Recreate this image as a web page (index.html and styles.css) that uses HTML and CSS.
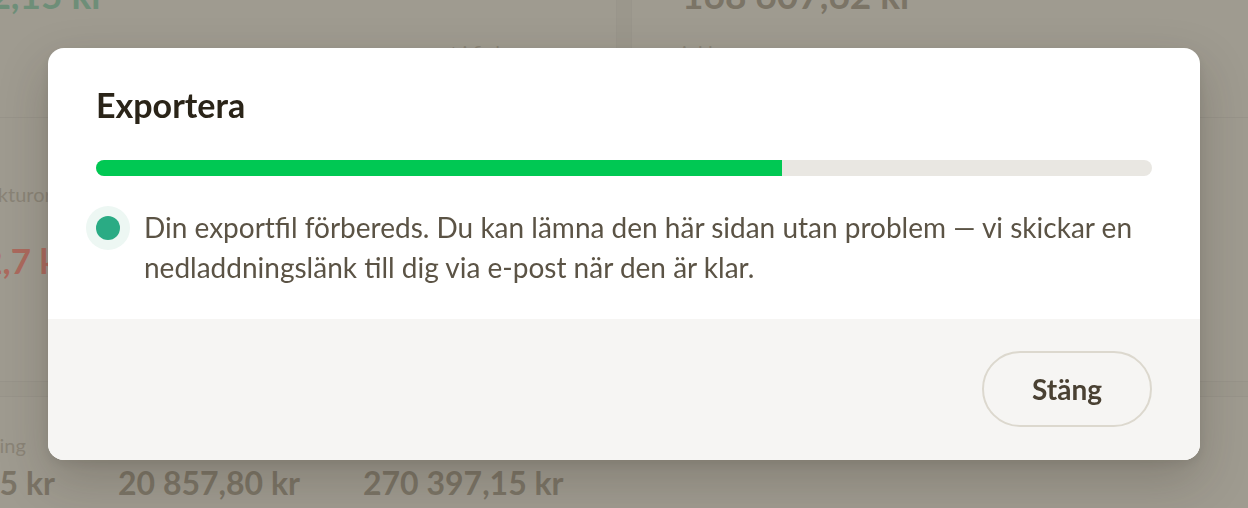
FILE: index.html
```html
<!DOCTYPE html>
<html lang="sv">
<head>
<meta charset="utf-8">
<title>Exportera</title>
<link rel="stylesheet" href="styles.css">
</head>
<body>
<div class="dash">
  <div class="row row1">
    <div class="card card-left">
      <div class="endbox endbox-top"><span class="val val-big val-green">45 312,15 kr</span></div>
      <div class="endbox endbox-label"><span class="label">mot i fjol</span></div>
    </div>
    <div class="gutter"></div>
    <div class="card card-right">
      <div class="val val-big val-gray val-top">168 607,62 kr</div>
      <div class="label label-top">inkl. moms</div>
    </div>
  </div>
  <div class="row row2">
    <div class="card">
      <div class="label label-mid">Fakturor</div>
      <div class="val val-red">12,7 kr</div>
    </div>
  </div>
  <div class="row row3"></div>
  <div class="row row4">
    <div class="col">
      <div class="label label-bottom label-shift">Total fakturering</div>
      <div class="val val-gray">48 412,35 kr</div>
    </div>
    <div class="col">
      <div class="label label-bottom">&nbsp;</div>
      <div class="val val-gray">20 857,80 kr</div>
    </div>
    <div class="col">
      <div class="label label-bottom">&nbsp;</div>
      <div class="val val-gray">270 397,15 kr</div>
    </div>
  </div>
</div>

<div class="overlay">
  <div class="modal" role="dialog" aria-labelledby="modal-title">
    <div class="modal-body">
      <h2 class="modal-title" id="modal-title">Exportera</h2>
      <div class="progress"><div class="progress-fill" style="width: 65%"></div></div>
      <div class="status">
        <span class="status-dot"></span>
        <p class="status-text">Din exportfil förbereds. Du kan lämna den här sidan utan problem — vi skickar en nedladdningslänk till dig via e-post när den är klar.</p>
      </div>
    </div>
    <div class="modal-footer">
      <button class="btn-close" type="button">Stäng</button>
    </div>
  </div>
</div>
</body>
</html>
```
FILE: styles.css
```css
* { box-sizing: border-box; }

html, body {
  margin: 0;
  padding: 0;
}

body {
  width: 1248px;
  height: 508px;
  overflow: hidden;
  background: #9f9b90;
  font-family: Lato, "Noto Sans", "Liberation Sans", sans-serif;
}

/* ---------- dimmed dashboard underneath ---------- */
.dash {
  display: flex;
  flex-direction: column;
  height: 508px;
}

.row { display: flex; }

.row1 {
  height: 118px;
  border-bottom: 1px solid #98948a;
}

.card-left { width: 616px; flex: none; }

.gutter {
  width: 16px;
  flex: none;
  background: #9b978c;
  border-left: 1px solid #99958b;
  border-right: 1px solid #99958b;
}

.card {
  overflow: hidden;
}

.card-right { flex: 1; padding-left: 50px; }

.row2 {
  height: 264px;
  border-bottom: 1px solid #98948a;
}

.row2 .card { flex: 1; }

.row3 {
  height: 15px;
  background: #9d998e;
  border-bottom: 1px solid #98948a;
}

.row4 {
  flex: 1;
  margin-left: -127px;
  padding-top: 36px;
}

.col { width: 245px; flex: none; }

.endbox {
  display: flex;
  justify-content: flex-end;
  white-space: nowrap;
}

.endbox-top { width: 105px; margin-top: -24px; }
.endbox-label { width: 500px; margin-top: 27px; }

.val {
  font-weight: 700;
  font-size: 32px;
  line-height: 32px;
  white-space: nowrap;
}

.val-big {
  font-size: 37px;
  line-height: 37px;
}

.val-green { color: #6e8e78; }
.val-gray { color: #7b7466; }
.val-top { margin-top: -24px; }

.val-red {
  color: #ac6a5e;
  font-size: 35px;
  line-height: 40px;
  margin-left: -38px;
  margin-top: 34px;
}

.label {
  font-size: 20px;
  line-height: 24px;
  color: #8a8477;
  white-space: nowrap;
}

.label-top { margin-top: 27px; }
.label-mid { margin-top: 64px; margin-left: -22px; }
.label-bottom { margin-bottom: 10px; }
.label-shift { margin-left: 9px; }

/* ---------- modal ---------- */
.overlay {
  position: fixed;
  inset: 0;
  display: flex;
  align-items: center;
  justify-content: center;
}

.modal {
  width: 1152px;
  height: 412px;
  background: #ffffff;
  border-radius: 16px;
  overflow: hidden;
  display: flex;
  flex-direction: column;
  box-shadow: 0 20px 50px rgba(40, 34, 22, 0.22), 0 4px 12px rgba(40, 34, 22, 0.08);
}

.modal-body {
  padding: 40px 48px 32px;
}

.modal-title {
  margin: 0;
  font-size: 34px;
  line-height: 34px;
  font-weight: 700;
  color: #2a2418;
}

.progress {
  margin-top: 38px;
  height: 16px;
  border-radius: 8px;
  background: #e9e7e2;
  overflow: hidden;
}

.progress-fill {
  height: 100%;
  background: #00c853;
}

.status {
  margin-top: 31px;
  display: flex;
  align-items: flex-start;
  gap: 24px;
}

.status-dot {
  flex: none;
  width: 24px;
  height: 24px;
  margin-top: 9px;
  border-radius: 50%;
  background: #2aab84;
  box-shadow: 0 0 0 10px #edf7f3;
}

.status-text {
  margin: 0;
  font-size: 28px;
  line-height: 40px;
  color: #5b5345;
}

.modal-footer {
  flex: 1;
  background: #f6f5f3;
  padding: 32px 48px;
  display: flex;
  justify-content: flex-end;
  align-items: flex-start;
}

.btn-close {
  height: 76px;
  padding: 0 48px;
  border: 2px solid #dcd8ce;
  border-radius: 999px;
  background: transparent;
  font-family: Lato, "Noto Sans", "Liberation Sans", sans-serif;
  font-weight: 700;
  font-size: 28px;
  color: #4a4133;
  cursor: pointer;
}
```
